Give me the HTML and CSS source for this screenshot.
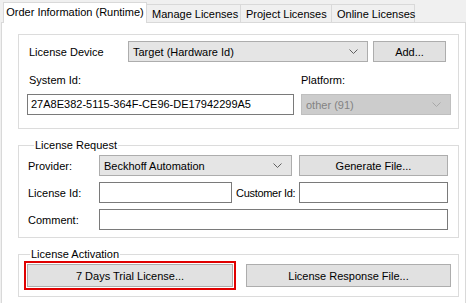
FILE: index.html
```html
<!DOCTYPE html>
<html lang="en">
<head>
    <meta charset="UTF-8">
    <title>License Manager</title>
    <link rel="stylesheet" href="styles.css">
</head>
<body>
    <div class="tabs">
        <div class="tab active tab-order">Order Information (Runtime)</div>
        <div class="tab tab-manage">Manage Licenses</div>
        <div class="tab tab-project">Project Licenses</div>
        <div class="tab tab-online">Online Licenses</div>
    </div>
    <div class="panel">
        <div class="group group-device">
            <div class="row row-device">
                <span class="label label-device">License Device</span>
                <div class="combo combo-device">
                    <span>Target (Hardware Id)</span>
                    <svg class="chevron" width="9" height="5" viewBox="0 0 9 5"><polyline points="0.5,0.5 4.5,4.5 8.5,0.5" /></svg>
                </div>
                <button class="btn btn-add">Add...</button>
            </div>
            <div class="row row-labels">
                <span class="label label-sysid">System Id:</span>
                <span class="label">Platform:</span>
            </div>
            <div class="row row-sysid">
                <div class="textbox textbox-sysid">27A8E382-5115-364F-CE96-DE17942299A5</div>
                <div class="combo combo-platform disabled">
                    <span>other (91)</span>
                    <svg class="chevron" width="9" height="5" viewBox="0 0 9 5"><polyline points="0.5,0.5 4.5,4.5 8.5,0.5" /></svg>
                </div>
            </div>
        </div>

        <fieldset class="group group-request">
            <legend>License Request</legend>
            <div class="row row-provider">
                <span class="label label-short">Provider:</span>
                <div class="combo combo-provider">
                    <span>Beckhoff Automation</span>
                    <svg class="chevron" width="9" height="5" viewBox="0 0 9 5"><polyline points="0.5,0.5 4.5,4.5 8.5,0.5" /></svg>
                </div>
                <button class="btn btn-generate">Generate File...</button>
            </div>
            <div class="row row-ids">
                <span class="label label-short">License Id:</span>
                <div class="textbox textbox-license"></div>
                <span class="label label-customer">Customer Id:</span>
                <div class="textbox textbox-customer"></div>
            </div>
            <div class="row row-comment">
                <span class="label label-short">Comment:</span>
                <div class="textbox textbox-comment"></div>
            </div>
        </fieldset>

        <fieldset class="group group-activation">
            <legend>License Activation</legend>
            <div class="row row-activation">
                <div class="highlight">
                    <button class="btn btn-trial">7 Days Trial License...</button>
                </div>
                <button class="btn btn-response">License Response File...</button>
            </div>
        </fieldset>
    </div>
</body>
</html>
```

FILE: styles.css
```css
body {
    margin: 0;
    background-color: #f0f0f0;
    font-family: "Liberation Sans", Arial, sans-serif;
    font-size: 11px;
    color: #000;
    overflow: hidden;
}

/* tab strip */
.tabs {
    display: flex;
    align-items: flex-end;
    height: 22px;
    padding-left: 3px;
}

.tab {
    height: 18px;
    line-height: 18px;
    padding-left: 5px;
    background-color: #f0f0f0;
    border: 1px solid #d9d9d9;
    border-bottom: none;
    margin-left: -1px;
    white-space: nowrap;
    box-sizing: border-box;
}

.tab.active {
    position: relative;
    z-index: 1;
    height: 21px;
    line-height: 19px;
    margin-left: 0;
    margin-bottom: -1px;
    padding-left: 0;
    text-align: center;
    background-color: #fff;
}

.tab-order {
    width: 144px;
}

.tab-manage {
    width: 95px;
}

.tab-project {
    width: 92px;
}

.tab-online {
    width: 84px;
}

.panel {
    margin-left: 1px;
    height: 279px;
    background-color: #fff;
    border: 1px solid #d9d9d9;
    padding: 11px 0 0 16px;
}

/* group boxes */
.group {
    width: 441px;
    margin: 0;
    padding: 0;
    border: 1px solid #dcdcdc;
    box-sizing: border-box;
}

.group legend {
    margin-left: 6px;
    padding: 0 1px;
    line-height: 14px;
}

.group-device {
    height: 95px;
    padding: 6px 0 0 8px;
}

.group-request {
    margin-top: 9px;
    height: 100px;
    padding: 3px 0 0 9px;
}

.group-activation {
    margin-top: 9px;
    height: 50px;
    padding: 0 0 0 5px;
}

.row {
    display: flex;
    align-items: center;
}

.label {
    white-space: nowrap;
}

.label-device {
    width: 99px;
    padding-left: 2px;
}

.row-labels {
    height: 22px;
    margin-top: 7px;
}

.label-sysid {
    width: 272px;
    padding-left: 2px;
}

.row-sysid {
    margin-top: 3px;
    gap: 7px;
}

.label-short {
    width: 71px;
}

.row-ids {
    margin-top: 6px;
}

.row-comment {
    margin-top: 6px;
}

.label-customer {
    width: 63px;
    padding-left: 4px;
    letter-spacing: -0.3px;
    overflow: hidden;
}

/* controls */
.combo {
    display: flex;
    align-items: center;
    justify-content: space-between;
    height: 21px;
    padding: 0 9px 0 4px;
    background-color: #e5e5e5;
    border: 1px solid #adadad;
    box-sizing: border-box;
}

.chevron polyline {
    fill: none;
    stroke: #606060;
    stroke-width: 1;
}

.combo.disabled {
    background-color: #cccccc;
    border-color: #bfbfbf;
    color: #838383;
}

.combo.disabled .chevron polyline {
    stroke: #a8a8a8;
}

.combo-device {
    width: 240px;
}

.combo-platform {
    width: 150px;
}

.combo-provider {
    width: 193px;
}

.btn {
    height: 21px;
    padding: 0;
    font-family: inherit;
    font-size: 11px;
    color: #000;
    background-color: #e1e1e1;
    border: 1px solid #adadad;
    box-sizing: border-box;
}

.btn-add {
    width: 73px;
    margin-left: 5px;
}

.btn-generate {
    width: 149px;
    margin-left: 7px;
}

.textbox {
    height: 21px;
    line-height: 19px;
    padding: 0 3px;
    background-color: #fff;
    border: 1px solid #7a7a7a;
    box-sizing: border-box;
    white-space: nowrap;
}

.textbox-sysid {
    width: 267px;
}

.textbox-license {
    width: 133px;
}

.textbox-customer {
    width: 149px;
}

.textbox-comment {
    width: 349px;
}

.highlight {
    border: 2px solid #e00000;
    padding: 1px;
}

.btn-trial {
    display: block;
    width: 206px;
    height: 23px;
}

.btn-response {
    width: 205px;
    height: 23px;
    margin-left: 10px;
}
```
